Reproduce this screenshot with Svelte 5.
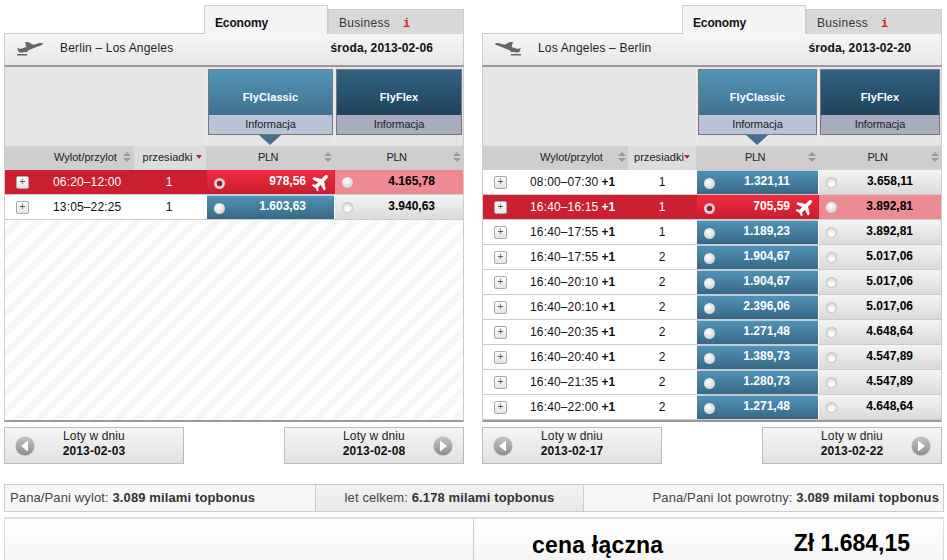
<script>
  const panels = [
    {
      side: 'left', route: 'Berlin – Los Angeles', date: 'środa, 2013-02-06', land: false,
      prev: '2013-02-03', next: '2013-02-08',
      rows: [
        { t: '06:20–12:00', s: 1, a: '978,56', b: '4.165,78', sel: true },
        { t: '13:05–22:25', s: 1, a: '1.603,63', b: '3.940,63' }
      ]
    },
    {
      side: 'right', route: 'Los Angeles – Berlin', date: 'środa, 2013-02-20', land: true,
      prev: '2013-02-17', next: '2013-02-22',
      rows: [
        { t: '08:00–07:30', p: 1, s: 1, a: '1.321,11', b: '3.658,11' },
        { t: '16:40–16:15', p: 1, s: 1, a: '705,59', b: '3.892,81', sel: true },
        { t: '16:40–17:55', p: 1, s: 1, a: '1.189,23', b: '3.892,81' },
        { t: '16:40–17:55', p: 1, s: 2, a: '1.904,67', b: '5.017,06' },
        { t: '16:40–20:10', p: 1, s: 2, a: '1.904,67', b: '5.017,06' },
        { t: '16:40–20:10', p: 1, s: 2, a: '2.396,06', b: '5.017,06' },
        { t: '16:40–20:35', p: 1, s: 2, a: '1.271,48', b: '4.648,64' },
        { t: '16:40–20:40', p: 1, s: 2, a: '1.389,73', b: '4.547,89' },
        { t: '16:40–21:35', p: 1, s: 2, a: '1.280,73', b: '4.547,89' },
        { t: '16:40–22:00', p: 1, s: 2, a: '1.271,48', b: '4.648,64' }
      ]
    }
  ];
</script>

{#snippet sort()}
  <svg class="sort" viewBox="0 0 9 11" width="8" height="10"><path d="M4.5 0 9 4.5H0zM0 6.5h9L4.5 11z" fill="#999" /></svg>
{/snippet}

{#snippet arrow(dir)}
  <svg class="arrow" viewBox="0 0 20 20" width="20" height="20">
    <defs>
      <linearGradient id="ag-{dir}" x1="0" y1="0" x2="0" y2="1"><stop offset="0" stop-color="#c4c4c4" /><stop offset="1" stop-color="#8e8e8e" /></linearGradient>
    </defs>
    <circle cx="10" cy="10" r="9.5" fill="url(#ag-{dir})" />
    {#if dir === 'l'}
      <path d="M13 4.5v11L6 10z" fill="#fff" />
    {:else}
      <path d="M7 4.5v11L14 10z" fill="#fff" />
    {/if}
  </svg>
{/snippet}

<div class="page">
  <div class="panels">
    {#each panels as p}
      <section class="panel {p.side}">
        <div class="tabs">
          <div class="tab active">Economy</div>
          <div class="tab"><span class="biz">Business</span><i class="info">i</i></div>
        </div>
        <div class="route">
          <svg class="dir" viewBox="0 0 30 16" width="30" height="16">
            <g fill="#666" transform={p.land ? 'translate(30 0) scale(-1 1)' : ''}>
              <path d="M2 6.5 5 8 23 2.5C26 1.6 28 2 28 2.7 28 3.7 25 4.8 22 5.8L9 11C6 12 4 11.5 3.5 10.5z" />
              <path d="M10 1h3l6 3-7 4z" />
              <path d="M11 9l3-1-2 3H9z" />
              <rect x="2" y="13" width="10" height="1.5" />
            </g>
          </svg>
          <span class="route-name">{p.route}</span>
          <b class="date">{p.date}</b>
        </div>
        <div class="table">
          <div class="grid fares">
            <div class="blank"></div>
            <div class="fare-cell">
              <div class="fare classic"><div class="fare-name">FlyClassic</div><div class="fare-info">Informacja</div></div>
              <div class="pointer"></div>
            </div>
            <div class="fare-cell">
              <div class="fare flex"><div class="fare-name">FlyFlex</div><div class="fare-info">Informacja</div></div>
            </div>
          </div>
          <div class="grid heads">
            <div class="h h-time"><span>Wylot/przylot</span>{@render sort()}</div>
            <div class="h h-stops"><span class="stops-label">przesiadki</span><span class="down"></span></div>
            <div class="h h-cur"><span class="cur">PLN</span>{@render sort()}</div>
            <div class="h h-cur"><span class="cur">PLN</span>{@render sort()}</div>
          </div>
          {#each p.rows as r}
            <div class="grid row" class:sel={r.sel}>
              <div class="c-time">
                <span class="plus">+</span>
                <span class="time">{r.t}{#if r.p}<b class="plus-day">+{r.p}</b>{/if}</span>
              </div>
              <div class="c-stops">{r.s}</div>
              <div class="price pa">
                <span class="radio"></span>
                <b>{r.a}</b>
                {#if r.sel}
                  <svg class="plane" viewBox="0 0 24 24" width="20" height="20"><path transform="rotate(45 12 12)" d="M12 1c1.300 0 2.200 1.200 2.200 3v5L22 14v3l-7.800-2.500V19l2.800 2v2l-5-1.200L7 23v-2l2.800-2v-4.500L2 17v-3l7.800-5V4c0-1.800.9-3 2.200-3z" fill="#fff" /></svg>
                {/if}
              </div>
              <div class="price pb">
                <span class="radio"></span>
                <b>{r.b}</b>
              </div>
            </div>
          {/each}
          <div class="stripes"></div>
        </div>
        <div class="nav">
          <button class="navbtn">
            <span class="slot">{@render arrow('l')}</span>
            <span class="navtext">Loty w dniu<b>{p.prev}</b></span>
            <span class="slot"></span>
          </button>
          <button class="navbtn">
            <span class="slot"></span>
            <span class="navtext">Loty w dniu<b>{p.next}</b></span>
            <span class="slot">{@render arrow('r')}</span>
          </button>
        </div>
      </section>
    {/each}
  </div>

  <div class="bonus">
    <div class="b1">Pana/Pani wylot: <b>3.089 milami topbonus</b></div>
    <div class="b2">let celkem: <b>6.178 milami topbonus</b></div>
    <div class="b3">Pana/Pani lot powrotny: <b>3.089 milami topbonus</b></div>
  </div>

  <div class="total">
    <div class="t-left"></div>
    <div class="t-right">
      <b class="t-label">cena łączna</b>
      <b class="t-sum">Zł 1.684,15</b>
    </div>
  </div>
</div>

<style>
  :global(body) {
    margin: 0;
    background: #fff;
  }
  .page {
    width: 947px;
    height: 560px;
    overflow: hidden;
    box-sizing: border-box;
    padding: 6px 3px 0 4px;
    font: 12px "Liberation Sans", Arial, sans-serif;
    color: #111;
  }
  .panels {
    display: flex;
    gap: 18px;
  }
  .panel {
    width: 460px;
  }

  .tabs {
    display: flex;
    justify-content: flex-end;
    align-items: flex-end;
    height: 28px;
    margin-bottom: -1px;
    position: relative;
  }
  .tab {
    box-sizing: border-box;
    width: 136px;
    height: 25px;
    padding-top: 6px;
    padding-left: 10px;
    background: #d8d8d8;
    border: 1px solid #ccc;
    border-bottom: 0;
    color: #333;
  }
  .biz {
    letter-spacing: 0.3px;
  }
  .tab.active {
    width: 124px;
    height: 29px;
    padding-top: 10px;
    padding-left: 10px;
    background: #f4f4f4;
    color: #111;
    font-weight: bold;
    letter-spacing: -0.15px;
    position: relative;
    z-index: 1;
  }
  .info {
    font: bold 12px "Liberation Mono", monospace;
    color: #d22;
    margin-left: 13px;
  }

  .route {
    box-sizing: border-box;
    height: 32px;
    display: flex;
    align-items: center;
    padding: 0 30px 2px 10px;
    border: 1px solid #ccc;
    border-bottom: 0;
    background: linear-gradient(#f6f6f6, #e6e6e6);
  }
  .dir {
    margin-right: 15px;
  }
  .route-name {
    color: #222;
    font-size: 12px;
    letter-spacing: 0.2px;
    margin-top: -2px;
  }
  .date {
    margin-left: auto;
    margin-top: -2px;
    letter-spacing: 0.1px;
  }

  .table {
    box-sizing: border-box;
    height: 357px;
    display: flex;
    flex-direction: column;
    border: 1px solid #ccc;
    border-top: 2px solid #999;
    border-bottom: 2px solid #999;
  }
  .grid {
    display: grid;
  }
  .left .grid {
    grid-template-columns: 129px 72px 128px 129px;
  }
  .right .grid {
    grid-template-columns: 145px 68px 122px 123px;
  }

  .fares {
    height: 79px;
    background: #e5e5e5;
  }
  .blank {
    grid-column: span 2;
  }
  .fare-cell {
    position: relative;
    box-sizing: border-box;
    padding: 2px 1px 0 1px;
    border-left: 1px solid #ececec;
  }
  .fare {
    border: 1px solid #777;
    height: 66px;
    box-sizing: border-box;
    display: flex;
    flex-direction: column;
    text-align: center;
  }
  .fare-name {
    height: 45px;
    line-height: 54px;
    font-size: 11px;
    font-weight: bold;
    color: #fff;
    letter-spacing: 0.1px;
  }
  .fare-info {
    flex: 1;
    line-height: 18px;
    font-size: 11px;
    letter-spacing: -0.1px;
    color: #222;
  }
  .classic .fare-name {
    background: linear-gradient(#5b9abc 0, #5293b6 4%, #40718f 100%);
  }
  .classic .fare-info {
    background: #b6c4d6;
  }
  .flex .fare-name {
    background: linear-gradient(#2f6282, #23435c);
  }
  .flex .fare-info {
    background: #a7adbd;
  }
  .pointer {
    position: absolute;
    top: 68px;
    left: 52px;
    width: 0;
    height: 0;
    border-left: 11px solid transparent;
    border-right: 11px solid transparent;
    border-top: 10px solid #44708e;
  }
  .right .pointer {
    left: 49px;
  }

  .heads {
    height: 24px;
    background: #cecece;
    color: #222;
  }
  .h {
    display: flex;
    align-items: center;
    position: relative;
    font-size: 11px;
    padding-bottom: 2px;
  }
  .h-time {
    padding-left: 49px;
  }
  .right .h-time {
    padding-left: 57px;
  }
  .h-time .sort {
    margin-left: 6px;
  }
  .right .h-time .sort {
    margin-left: 15px;
  }
  .h-stops {
    background: #dcdcdc;
    justify-content: center;
    padding-left: 4px;
    gap: 3px;
  }
  .stops-label {
    letter-spacing: 0.05px;
  }
  .right .h-stops {
    padding-left: 0;
    gap: 0;
  }
  .down {
    width: 0;
    height: 0;
    border-left: 3.500px solid transparent;
    border-right: 3.500px solid transparent;
    border-top: 4px solid #c81e30;
  }
  .h-cur {
    justify-content: center;
    padding-right: 4px;
  }
  .cur {
    letter-spacing: -0.5px;
  }
  .h-cur .sort {
    position: absolute;
    right: 2px;
    top: 6px;
  }

  .row {
    height: 25px;
    box-sizing: border-box;
    border-bottom: 1px solid #ccc;
    background: #fff;
    align-items: stretch;
    font-size: 12px;
  }
  .row.sel {
    background: #cc1f30;
    color: #fff;
  }
  .c-time {
    display: flex;
    align-items: center;
  }
  .plus {
    box-sizing: border-box;
    width: 13px;
    height: 13px;
    margin-left: 11px;
    border: 1px solid #aaa;
    border-radius: 2px;
    background: linear-gradient(#fff, #e4e4e4);
    color: #555;
    font-size: 10px;
    line-height: 10px;
    text-align: center;
  }
  .time {
    margin-left: 24px;
    white-space: nowrap;
    letter-spacing: 0.15px;
  }
  .right .time {
    margin-left: 23px;
  }
  .plus-day {
    margin-left: 3px;
  }
  .c-stops {
    display: flex;
    align-items: center;
    justify-content: center;
  }
  .left .c-stops {
    padding-right: 2px;
  }
  .price {
    position: relative;
    display: flex;
    align-items: center;
    justify-content: flex-end;
    box-sizing: border-box;
    margin-left: 1px;
    padding: 0 28px 3px 0;
  }
  .pa {
    background: linear-gradient(#5092b6, #386885);
    color: #fff;
    border-top: 1px solid #b5cfdc;
  }
  .pb {
    background: linear-gradient(#f4f4f4, #dadada);
    color: #000;
  }
  .sel .pa {
    background: linear-gradient(#f02a3c, #c81e30);
    border-top-color: #f02a3c;
  }
  .sel .pb {
    background: #ee8a92;
  }
  .radio {
    position: absolute;
    left: 7px;
    top: 7px;
    width: 11px;
    height: 11px;
    border-radius: 50%;
    background: radial-gradient(circle at 40% 35%, #fff, #c4c4c4);
  }
  .pb .radio {
    background: radial-gradient(circle at 50% 70%, #fff 20%, #d0d0d0 75%);
    box-shadow: inset 0 0 0 1px #c8c8c8;
  }
  .sel .pb .radio {
    background: radial-gradient(circle at 40% 35%, #fff, #c4c4c4);
    box-shadow: none;
  }
  .sel .pa .radio {
    background: radial-gradient(circle, #a01828 0 2.400px, #e4d6d6 3.200px, #c8bcbc 100%);
  }
  .plane {
    position: absolute;
    right: 3px;
    top: 1px;
  }
  .stripes {
    flex: 1;
    background: repeating-linear-gradient(135deg, #fff 0 7px, #f7f7f7 7px 14px);
  }

  .nav {
    display: flex;
    justify-content: space-between;
    margin-top: 5px;
  }
  .navbtn {
    display: grid;
    grid-template-columns: 40px 1fr 40px;
    align-items: center;
    box-sizing: border-box;
    width: 180px;
    height: 37px;
    padding: 0;
    border: 1px solid #bbb;
    background: linear-gradient(#f4f4f4, #e2e2e2);
    font: 12px "Liberation Sans", Arial, sans-serif;
    color: #222;
    text-align: center;
  }
  .slot {
    display: flex;
    justify-content: center;
  }
  .navtext {
    line-height: 15.500px;
    margin-top: -3px;
    letter-spacing: 0.1px;
  }
  .navtext b {
    display: block;
    color: #111;
  }

  .bonus {
    display: grid;
    grid-template-columns: 310px 269px 1fr;
    box-sizing: border-box;
    width: 940px;
    height: 28px;
    margin-top: 20px;
    border: 1px solid #ccc;
    font-size: 13px;
    letter-spacing: 0.12px;
    color: #444;
    line-height: 26px;
    white-space: nowrap;
  }
  .bonus b {
    color: #333;
  }
  .b1 {
    padding-left: 5px;
    background: #f7f7f7;
  }
  .b2 {
    text-align: center;
    background: linear-gradient(#f2f2f2, #e8e8e8);
    border-left: 1px solid #ccc;
    border-right: 1px solid #ccc;
  }
  .b3 {
    text-align: right;
    padding-right: 4px;
    background: #f7f7f7;
  }

  .total {
    display: grid;
    grid-template-columns: 468px 1fr;
    box-sizing: border-box;
    width: 940px;
    height: 50px;
    margin-top: 5px;
    border: 1px solid #ddd;
    border-top-width: 2px;
    background: linear-gradient(#fff, #f4f4f4);
  }
  .t-right {
    position: relative;
    border-left: 1px solid #ccc;
    display: flex;
    align-items: flex-start;
    padding: 13px 33px 0 58px;
    font-size: 23px;
    color: #000;
  }
  .t-label {
    letter-spacing: 0.2px;
  }
  .t-sum {
    margin-left: auto;
    margin-top: -2px;
  }
</style>
